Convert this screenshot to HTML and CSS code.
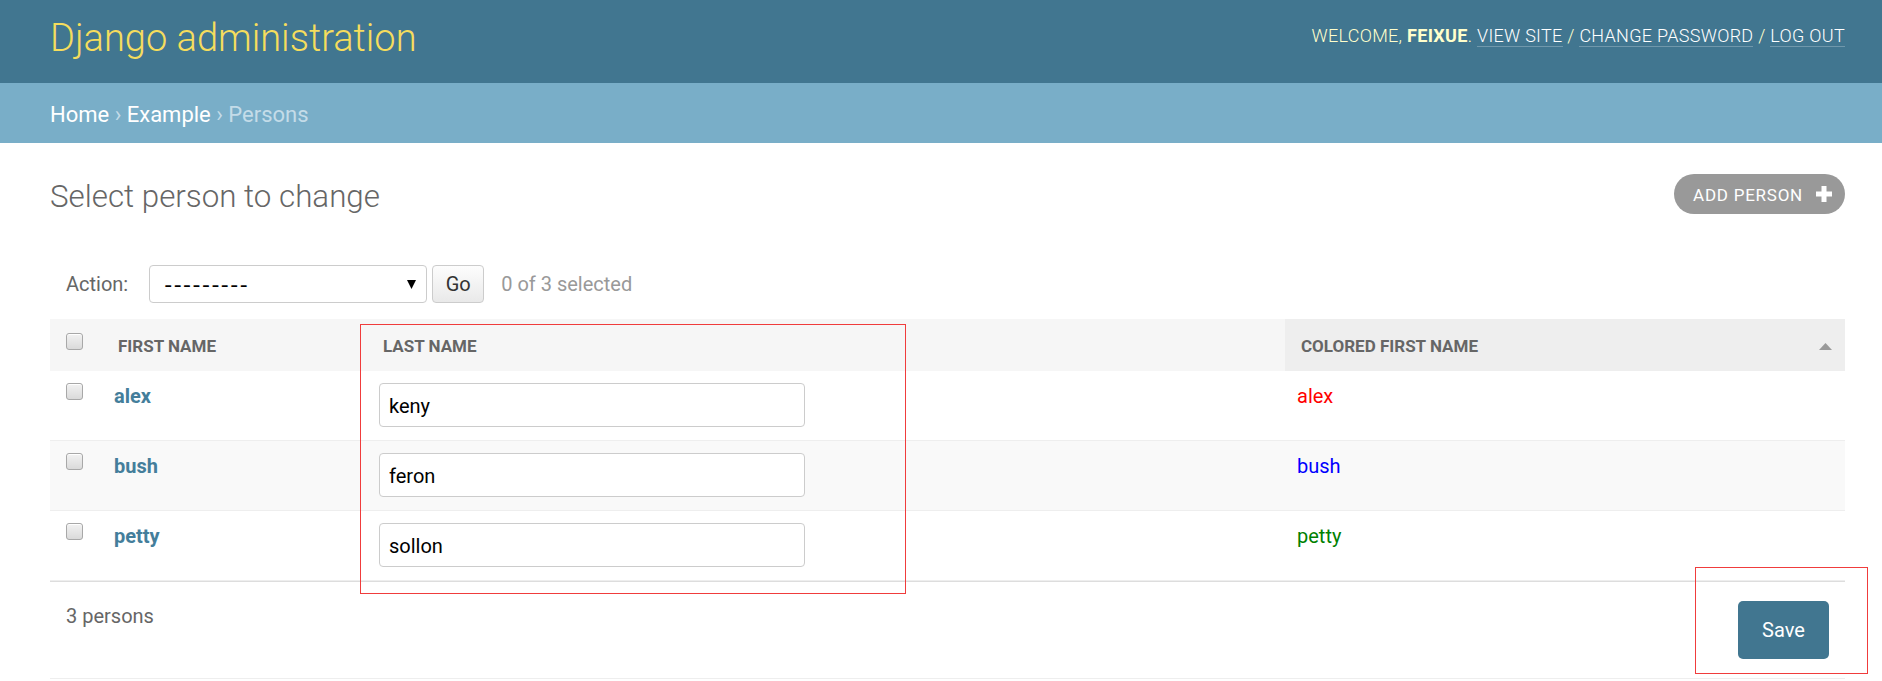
FILE: index.html
```html
<!DOCTYPE html>
<html lang="en">
<head>
  <meta charset="UTF-8">
  <title>Select person to change | Django site admin</title>
  <link rel="stylesheet" href="styles.css">
</head>
<body>

  <div class="header">
    <h1 class="branding">Django administration</h1>
    <div class="user-tools">
      Welcome, <strong>feixue</strong>.
      <a href="#">View site</a> /
      <a href="#">Change password</a> /
      <a href="#">Log out</a>
    </div>
  </div>

  <div class="breadcrumbs">
    <a href="#">Home</a> &rsaquo; <a href="#">Example</a> &rsaquo; Persons
  </div>

  <div class="content">
    <div class="title-row">
      <h1 class="page-title">Select person to change</h1>
      <a href="#" class="addlink">
        Add person
        <svg width="16" height="16" viewBox="0 0 16 16"><path d="M5.5 0h5v5.5H16v5h-5.5V16h-5v-5.5H0v-5h5.5z" fill="#fff"/></svg>
      </a>
    </div>

    <div class="actions">
      <label>Action:</label>
      <div class="select">
        <span class="select-text">---------</span>
        <svg width="9" height="9" viewBox="0 0 9 9"><polygon points="0,0 9,0 4.5,9" fill="#000"/></svg>
      </div>
      <button class="go">Go</button>
      <span class="counter">0 of 3 selected</span>
    </div>

    <table class="result-list">
      <colgroup>
        <col style="width: 52px">
        <col style="width: 265px">
        <col style="width: 918px">
        <col style="width: 560px">
      </colgroup>
      <thead>
        <tr>
          <th class="check-col"><span class="checkbox head-check"></span></th>
          <th>First name</th>
          <th>Last name</th>
          <th class="sorted">
            <div class="sort-head">
              <span>Colored first name</span>
              <svg width="13" height="7" viewBox="0 0 13 7"><polygon points="0,7 13,7 6.5,0" fill="#999"/></svg>
            </div>
          </th>
        </tr>
      </thead>
      <tbody>
        <tr>
          <td class="check-col"><span class="checkbox"></span></td>
          <td class="text-cell"><a href="#" class="row-link">alex</a></td>
          <td><input class="vTextField" type="text" value="keny"></td>
          <td class="text-cell"><span class="red">alex</span></td>
        </tr>
        <tr class="row2">
          <td class="check-col"><span class="checkbox"></span></td>
          <td class="text-cell"><a href="#" class="row-link">bush</a></td>
          <td><input class="vTextField" type="text" value="feron"></td>
          <td class="text-cell"><span class="blue">bush</span></td>
        </tr>
        <tr>
          <td class="check-col"><span class="checkbox"></span></td>
          <td class="text-cell"><a href="#" class="row-link">petty</a></td>
          <td><input class="vTextField" type="text" value="sollon"></td>
          <td class="text-cell"><span class="green">petty</span></td>
        </tr>
      </tbody>
    </table>

    <div class="paginator">
      <p class="count">3 persons</p>
      <button class="save">Save</button>
    </div>
  </div>

  <!-- red annotation boxes drawn over the screenshot -->
  <div class="mark mark-fields"></div>
  <div class="mark mark-save"></div>

</body>
</html>
```

FILE: styles.css
```css
body {
  margin: 0;
  font-family: Roboto, "Liberation Sans", sans-serif;
  color: #333;
  background: #fff;
  position: relative;
}

a {
  text-decoration: none;
}

/* header */

.header {
  display: flex;
  justify-content: space-between;
  align-items: flex-start;
  height: 83px;
  box-sizing: border-box;
  padding: 0 37px 0 50px;
  background: #417690;
}

.branding {
  margin: 19px 0 0;
  font-size: 38px;
  line-height: 38px;
  font-weight: 300;
  color: #f5dd5d;
}

.user-tools {
  padding-top: 27px;
  font-size: 18px;
  line-height: 18px;
  font-weight: 300;
  letter-spacing: 0.3px;
  text-transform: uppercase;
  color: #ffc;
}

.user-tools strong {
  font-weight: 700;
}

.user-tools a {
  color: #fff;
  border-bottom: 1px solid rgba(255,255,255,0.25);
}

.breadcrumbs {
  height: 60px;
  box-sizing: border-box;
  padding: 21px 50px 0;
  background: #79aec8;
  color: #c4dce8;
  font-size: 22px;
  line-height: 22px;
}

.breadcrumbs a {
  color: #fff;
}

/* content */

.content {
  padding: 0 37px 0 50px;
}

.title-row {
  display: flex;
  justify-content: space-between;
  align-items: flex-start;
}

.page-title {
  margin: 38px 0 0;
  font-size: 31.3px;
  line-height: 31px;
  font-weight: 300;
  color: #666;
}

.addlink {
  display: flex;
  align-items: center;
  gap: 13px;
  height: 40px;
  box-sizing: border-box;
  margin-top: 31px;
  padding: 2px 13px 0 19px;
  border-radius: 20px;
  background: #999;
  color: #fff;
  font-size: 17px;
  letter-spacing: 0.75px;
  text-transform: uppercase;
}

.addlink svg {
  margin-top: -2px;
}

.actions {
  display: flex;
  align-items: center;
  height: 38px;
  margin-top: 51px;
  padding-left: 16px;
  font-size: 20px;
}

.actions label {
  color: #666;
  margin-right: 21px;
}

.select {
  display: flex;
  justify-content: space-between;
  align-items: center;
  width: 278px;
  height: 38px;
  box-sizing: border-box;
  padding: 0 10px 0 14px;
  border: 1px solid #ccc;
  border-radius: 4px;
  background: #fff;
}

.select-text {
  font-family: "DejaVu Sans", sans-serif;
  font-size: 22px;
  letter-spacing: 1.5px;
  color: #000;
}

.go {
  width: 52px;
  height: 38px;
  margin-left: 5px;
  border: 1px solid #ccc;
  border-radius: 4px;
  background: linear-gradient(#fdfdfd, #e9e9e9);
  font-family: Roboto, sans-serif;
  font-size: 20px;
  color: #333;
  padding: 0;
}

.counter {
  margin-left: 17px;
  color: #999;
}

/* result list */

.result-list {
  width: 100%;
  margin-top: 16px;
  border-collapse: collapse;
  table-layout: fixed;
}

.result-list th {
  padding: 17px 16px 15px;
  background: #f6f6f6;
  text-align: left;
  vertical-align: top;
  font-size: 17px;
  line-height: 20px;
  font-weight: 700;
  text-transform: uppercase;
  color: #666;
}

.result-list th.sorted {
  background: #eee;
  padding-right: 13px;
}

.sort-head {
  display: flex;
  justify-content: space-between;
  align-items: center;
}

.result-list td {
  padding: 12px 12px 13px;
  border-bottom: 1px solid #eee;
  vertical-align: top;
  font-size: 20px;
  line-height: 26px;
}

.result-list .check-col {
  padding-left: 16px;
}

.result-list tr.row2 td {
  background: #f9f9f9;
}

.checkbox {
  display: block;
  width: 17px;
  height: 17px;
  box-sizing: border-box;
  border: 1px solid #a8a8a8;
  border-radius: 3px;
  background: linear-gradient(#f2f2f2, #dadada);
  box-shadow: inset 0 1px 0 #fff;
}

.head-check {
  margin-top: -3px;
}

.row-link {
  font-weight: 700;
  color: #447e9b;
}

.vTextField {
  display: block;
  width: 426px;
  height: 44px;
  box-sizing: border-box;
  margin: 0;
  padding: 2px 9px 0;
  border: 1px solid #ccc;
  border-radius: 4px;
  font-family: Roboto, sans-serif;
  font-size: 20px;
  color: #000;
}

.red {
  color: #f00;
}

.blue {
  color: #00f;
}

.green {
  color: #008000;
}

.paginator {
  display: flex;
  justify-content: space-between;
  align-items: flex-start;
  padding: 19px 16px;
  border-top: 1px solid #ddd;
  border-bottom: 1px solid #eee;
}

.count {
  margin: 3px 0 0;
  font-size: 20px;
  line-height: 24px;
  color: #666;
}

.save {
  width: 91px;
  height: 58px;
  border: none;
  border-radius: 5px;
  background: #417690;
  color: #fff;
  font-family: Roboto, sans-serif;
  font-size: 20px;
  padding: 0;
}

/* annotations */

.mark {
  position: absolute;
  border: 1px solid #f03c3c;
  pointer-events: none;
}

.mark-fields {
  left: 360px;
  top: 324px;
  width: 544px;
  height: 268px;
}

.mark-save {
  left: 1695px;
  top: 567px;
  width: 171px;
  height: 105px;
}
```
